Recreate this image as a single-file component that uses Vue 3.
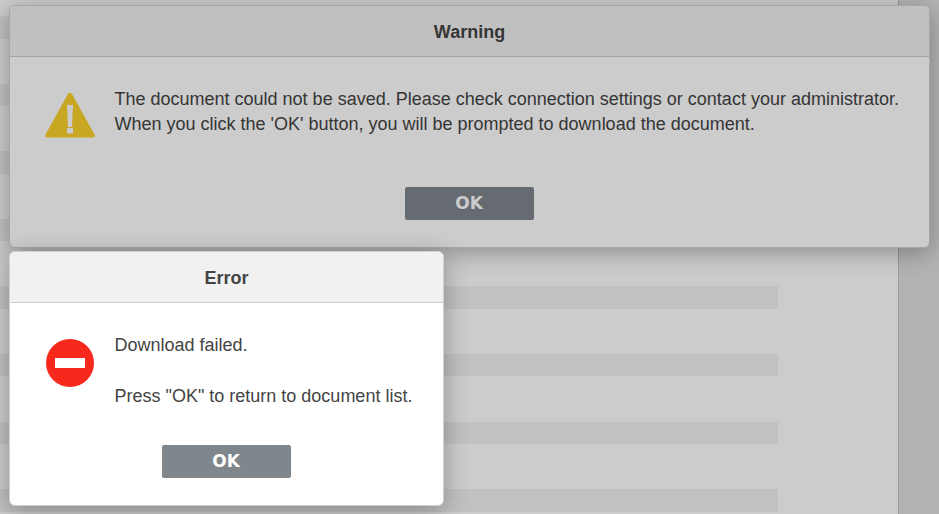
<script setup>
const rows = [16, 84, 151, 219, 286, 354, 421, 489]
</script>

<template>
  <div class="page">
    <div class="doc">
      <div class="rows">
        <div v-for="r in rows" :key="r" class="row"></div>
      </div>
    </div>
    <div class="side"></div>

    <section class="dialog warning">
      <header class="head">Warning</header>
      <div class="body">
        <svg class="icon warn-icon" width="52" height="46" viewBox="0 0 52 46">
          <path d="M24 2 Q26 -.5 28 2 L50.5 42.5 Q51.8 45.5 49 45.5 L3 45.5 Q.2 45.5 1.5 42.5 Z" fill="#fbd12c"/>
          <path d="M23 13 H29 L28 35 H24 Z" fill="#fff"/>
          <rect x="23" y="36" width="6" height="5.5" fill="#fff"/>
        </svg>
        <div class="msg tight">
          <div>The document could not be saved. Please check connection settings or contact your administrator.</div>
          <div>When you click the 'OK' button, you will be prompted to download the document.</div>
        </div>
      </div>
      <div class="foot"><button class="btn">OK</button></div>
    </section>
    <div class="overlay"></div>

    <section class="dialog error">
      <header class="head">Error</header>
      <div class="body">
        <svg class="icon err-icon" width="48" height="48" viewBox="0 0 48 48">
          <circle cx="24" cy="24" r="24" fill="#f7291d"/>
          <rect x="9" y="19" width="30" height="10" fill="#fff"/>
        </svg>
        <div class="msg">
          <div>Download failed.</div>
          <div class="gap">Press "OK" to return to document list.</div>
        </div>
      </div>
      <div class="foot"><button class="btn">OK</button></div>
    </section>
  </div>
</template>

<style>
html, body { margin: 0; background: #fff; overflow: hidden; }
</style>

<style scoped>
.page {
  position: relative;
  width: 939px;
  height: 514px;
  overflow: hidden;
  display: flex;
  font-family: "Liberation Sans", Arial, sans-serif;
  color: #444;
}
.doc { width: 898px; background: #fff; }
.rows { display: flex; flex-direction: column; gap: 45.1px; padding-top: 16px; }
.row { width: 778px; height: 22.5px; background: #f2f2f2; }
.side { flex: 1; background: #e0e0e0; border-left: 1px solid #c0c0c0; }
.overlay { position: absolute; inset: 0; background: rgba(0, 0, 0, 0.2); z-index: 3; }
.dialog {
  position: absolute;
  box-sizing: border-box;
  left: 9px;
  background: #fff;
  border: 1px solid #d0d0d0;
  border-radius: 6px;
  box-shadow: 0 5px 25px rgba(0, 0, 0, 0.3);
  display: flex;
  flex-direction: column;
  overflow: hidden;
}
.warning { top: 5px; width: 921px; height: 243px; z-index: 2; }
.error { top: 251px; width: 435px; height: 255px; z-index: 4; }
.head {
  box-sizing: border-box;
  height: 51px;
  flex: none;
  padding: 2px 0 0 0;
  background: #f1f1f1;
  border-bottom: 1px solid #ccc;
  display: flex;
  align-items: center;
  justify-content: center;
  font-size: 18px;
  font-weight: 700;
}
.body { position: relative; flex: 1; padding: 30px 0 0 104.5px; }
.icon { position: absolute; }
.warn-icon { left: 34px; top: 35px; }
.err-icon { left: 36px; top: 36px; }
.msg { font-size: 18px; line-height: 25.5px; white-space: nowrap; }
.tight { line-height: 25px; }
.gap { margin-top: 25.5px; }
.foot { flex: none; display: flex; justify-content: center; padding-bottom: 27px; }
.btn {
  width: 129px;
  height: 33px;
  border: 0;
  border-radius: 2px;
  padding: 0 1px 2px 0;
  background: #7f868c;
  color: #fff;
  font-family: "DejaVu Sans", sans-serif;
  font-size: 17px;
  font-weight: 700;
}
</style>
